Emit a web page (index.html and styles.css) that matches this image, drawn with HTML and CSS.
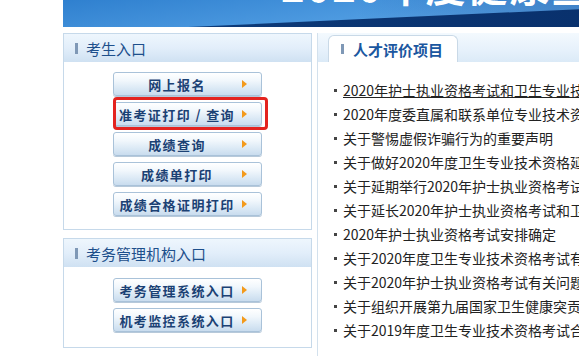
FILE: index.html
```html
<!DOCTYPE html>
<html lang="zh-CN">
<head>
<meta charset="utf-8">
<title>考生入口</title>
<link rel="stylesheet" href="styles.css">
</head>
<body>
<div class="page">
  <div class="banner">
    <span class="banner-title">2020年度健康宣传</span>
  </div>
  <div class="main">
    <div class="side">
      <div class="box box-exam">
        <div class="box-hd"><i class="bar"></i>考生入口</div>
        <div class="box-bd">
          <a class="btn" href="#"><span class="btn-txt">网上报名</span><i class="arr"></i></a>
          <a class="btn btn-marked" href="#"><span class="btn-txt">准考证打印 / 查询</span><i class="arr"></i></a>
          <a class="btn" href="#"><span class="btn-txt">成绩查询</span><i class="arr"></i></a>
          <a class="btn" href="#"><span class="btn-txt">成绩单打印</span><i class="arr"></i></a>
          <a class="btn" href="#"><span class="btn-txt">成绩合格证明打印</span><i class="arr"></i></a>
        </div>
      </div>
      <div class="box box-org">
        <div class="box-hd"><i class="bar"></i>考务管理机构入口</div>
        <div class="box-bd">
          <a class="btn" href="#"><span class="btn-txt">考务管理系统入口</span><i class="arr"></i></a>
          <a class="btn" href="#"><span class="btn-txt">机考监控系统入口</span><i class="arr"></i></a>
        </div>
      </div>
    </div>
    <div class="content">
      <div class="tabs">
        <div class="tab"><i class="bar"></i>人才评价项目</div>
      </div>
      <ul class="news">
        <li><a class="hover" href="#">2020年护士执业资格考试和卫生专业技术资格考试报名工作通知</a></li>
        <li><a href="#">2020年度委直属和联系单位专业技术资格评审工作通知</a></li>
        <li><a href="#">关于警惕虚假诈骗行为的重要声明</a></li>
        <li><a href="#">关于做好2020年度卫生专业技术资格延期考试工作的通知</a></li>
        <li><a href="#">关于延期举行2020年护士执业资格考试的公告</a></li>
        <li><a href="#">关于延长2020年护士执业资格考试和卫生专业技术资格考试报名时间的通知</a></li>
        <li><a href="#">2020年护士执业资格考试安排确定</a></li>
        <li><a href="#">关于2020年度卫生专业技术资格考试有关问题的通知</a></li>
        <li><a href="#">关于2020年护士执业资格考试有关问题的通知</a></li>
        <li><a href="#">关于组织开展第九届国家卫生健康突贡专家推荐工作的通知</a></li>
        <li><a href="#">关于2019年度卫生专业技术资格考试合格标准的通知</a></li>
      </ul>
    </div>
  </div>
</div>
</body>
</html>
```

FILE: styles.css
```css
html, body {
  margin: 0;
  padding: 0;
  background: #fff;
  overflow: hidden;
}

body {
  font-family: "Noto Sans CJK SC", "DejaVu Sans", sans-serif;
  color: #222;
}

a {
  text-decoration: none;
  color: inherit;
}

.page {
  width: 980px;
  margin-left: 63px;
}

/* banner */
.banner {
  position: relative;
  height: 27px;
  overflow: hidden;
  background: linear-gradient(172deg, #2f80cf 0%, #4d9ae0 35%, #7bb9ec 65%, #b9dbf6 100%);
}

.banner::before {
  content: "";
  position: absolute;
  left: 0;
  top: 0;
  right: 0;
  bottom: 0;
  background: linear-gradient(90deg, rgba(255,255,255,0) 0%, rgba(255,255,255,0) 30%, rgba(20,80,160,0.55) 60%, rgba(10,60,130,0.9) 100%);
  clip-path: polygon(20% 0, 100% 0, 100% 45%, 25% 100%, 0 100%, 0 70%);
}

.banner::after {
  content: "";
  position: absolute;
  left: 0;
  top: 0;
  right: 0;
  bottom: 0;
  background: linear-gradient(90deg, #0f3f7e 0%, #0a3370 40%, #052a62 100%);
  clip-path: polygon(125px 27px, 520px 9px, 980px 0, 980px 27px);
}

.banner-title {
  position: absolute;
  left: 218px;
  top: -44px;
  z-index: 1;
  font-size: 40px;
  font-weight: 700;
  color: #fff;
  letter-spacing: 2px;
  white-space: nowrap;
}

/* layout */
.main {
  display: flex;
  align-items: flex-start;
  gap: 5px;
  margin-top: 6px;
}

.side {
  width: 249px;
  display: flex;
  flex-direction: column;
  gap: 8px;
}

.box {
  border: 1px solid #c6d9ea;
  background: #fff;
}

.box-hd {
  height: 28px;
  display: flex;
  align-items: center;
  padding-left: 11px;
  font-size: 15px;
  color: #1d4f8b;
  background: linear-gradient(180deg, #eef6fd 0%, #e2eefa 50%, #cfe1f2 100%);
}

.bar {
  display: inline-block;
  width: 3px;
  height: 11px;
  background: #7f98b6;
  margin-right: 8px;
}

.box-bd {
  display: flex;
  flex-direction: column;
  align-items: center;
  gap: 6px;
}

.box-exam .box-bd {
  padding: 10px 0 13px;
}

.box-org .box-bd {
  padding: 11px 0 15px;
}

/* buttons */
.btn {
  position: relative;
  width: 147px;
  height: 22px;
  display: flex;
  align-items: center;
  border: 1px solid #a9c2d9;
  border-radius: 3px;
  background: linear-gradient(180deg, #ffffff 0%, #f1f7fc 35%, #dbe9f5 70%, #c9dcee 100%);
  box-shadow: 0 1px 0 #b7c9da;
  color: #1b4174;
  font-size: 13px;
  font-weight: 700;
  letter-spacing: 1.4px;
}

.btn-txt {
  flex: 1;
  text-align: center;
  white-space: nowrap;
  padding-left: 2px;
}

.arr {
  width: 0;
  height: 0;
  border-top: 4px solid transparent;
  border-bottom: 4px solid transparent;
  border-left: 5px solid #f39a1b;
  margin: 0 14px 0 4px;
  flex: none;
}

.btn-marked::after {
  content: "";
  position: absolute;
  left: -1px;
  right: -7px;
  top: -6px;
  bottom: -5px;
  border: 3px solid #e3231f;
  border-radius: 4px;
}

/* right content */
.content {
  flex: 1;
  min-height: 330px;
  border-left: 1px solid #d3e1ed;
}

.tabs {
  height: 29px;
  display: flex;
  align-items: flex-end;
  padding-left: 10px;
  background: linear-gradient(180deg, #f3f9fe 0%, #e6f1fb 60%, #dbeaf7 100%);
}

.tab {
  width: 116px;
  height: 26px;
  display: flex;
  align-items: center;
  padding-left: 12px;
  background: #fff;
  border: 1px solid #c9d9e7;
  border-bottom: none;
  border-radius: 6px 6px 0 0;
  font-size: 15px;
  font-weight: 700;
  color: #1b57a0;
}

.tab .bar {
  margin-right: 9px;
  height: 10px;
}

.news {
  list-style: none;
  margin: 0;
  padding: 16px 0 0 16px;
}

.news li {
  display: flex;
  align-items: center;
  height: 24px;
  font-size: 14px;
  white-space: nowrap;
  color: #222;
}

.news li::before {
  content: "";
  width: 3px;
  height: 3px;
  background: #444;
  margin-right: 6px;
  flex: none;
}

.news a.hover {
  text-decoration: underline;
}
```
